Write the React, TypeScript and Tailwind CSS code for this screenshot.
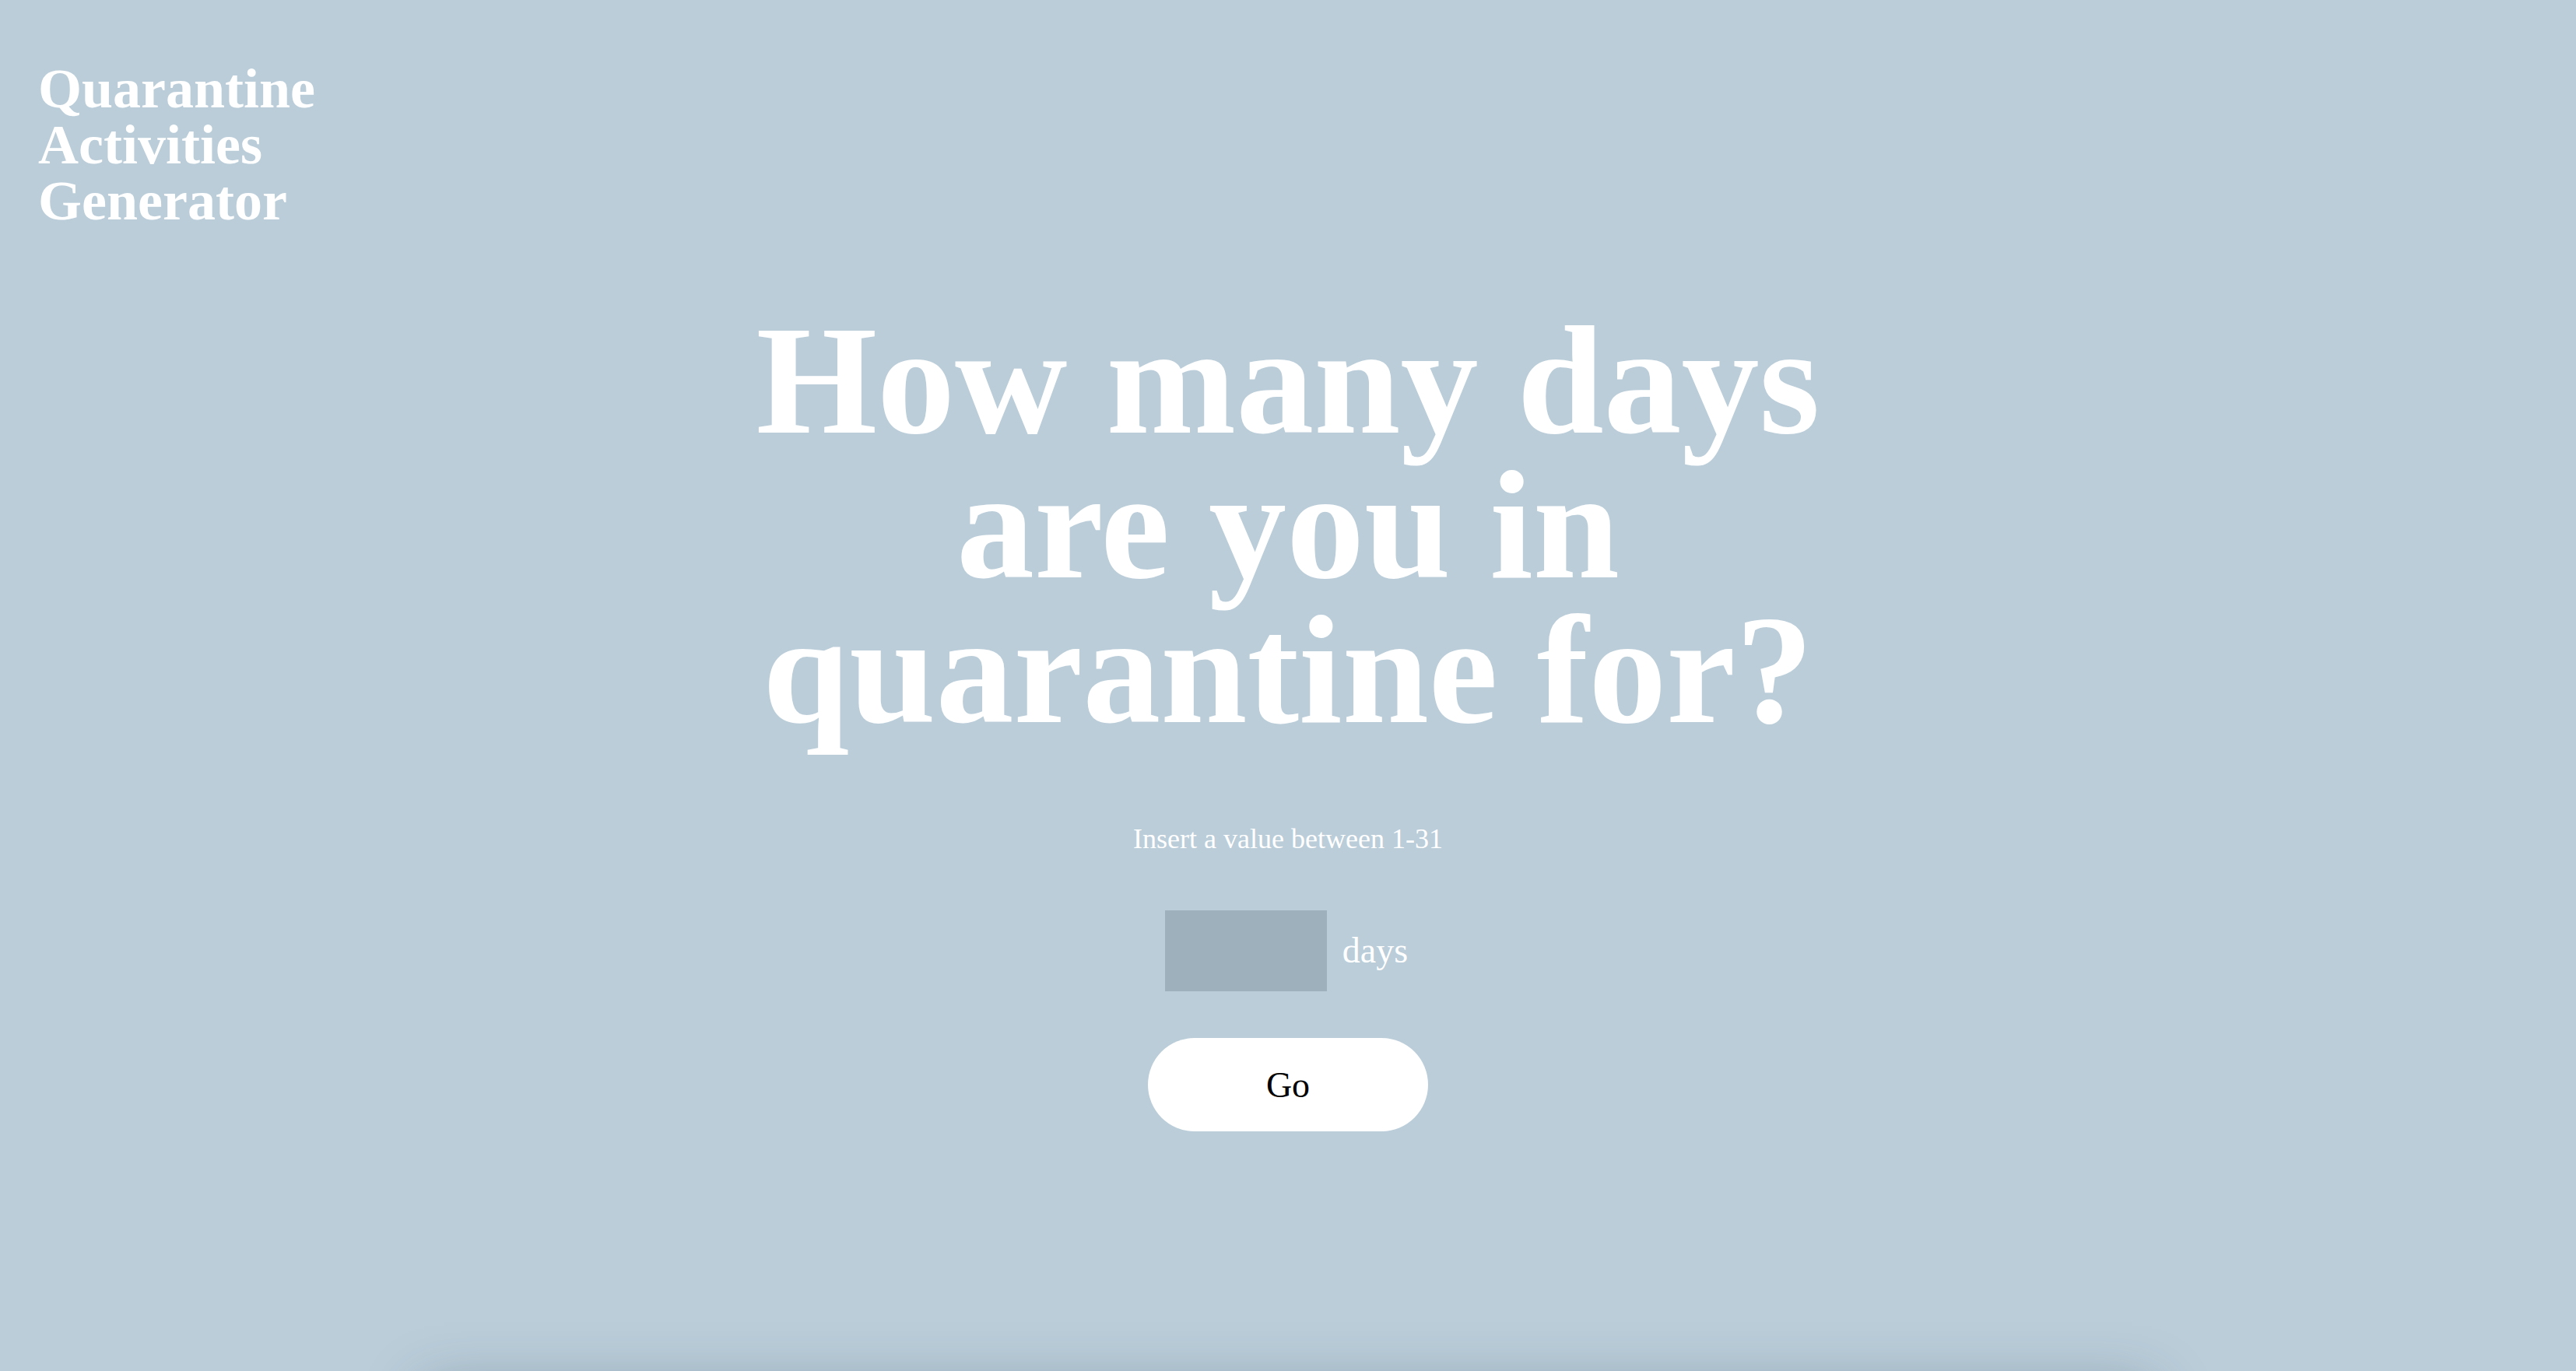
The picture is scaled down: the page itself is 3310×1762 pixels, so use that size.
export default function App() {
  return (
    <div
      className="h-screen overflow-hidden bg-[#bacdd9] text-white"
      style={{ fontFamily: '"Liberation Serif", "Times New Roman", serif' }}
    >
      {/* Logo */}
      <header className="pt-[78px] pl-[49px]">
        <h1 className="text-[72px] font-bold leading-[72px] w-[400px]">
          Quarantine Activities Generator
        </h1>
      </header>

      {/* Question */}
      <main className="flex flex-col items-center mt-[102px]">
        <h2 className="text-[200px] font-bold leading-[186px] text-center w-[1420px]">
          How many days are you in quarantine for?
        </h2>

        <p className="mt-[104px] text-[36px] leading-[40px]">Insert a value between 1-31</p>

        <div className="mt-[72px] flex items-center gap-[20px]">
          <input
            type="number"
            className="w-[208px] h-[104px] bg-[#9eb0bc] border-0 outline-none text-[46px] text-white text-center"
          />
          <span className="text-[46px] leading-[52px] pr-[4px]">days</span>
        </div>

        <button className="mt-[60px] w-[360px] h-[120px] rounded-full bg-white text-black text-[46px]">
          Go
        </button>
      </main>

      {/* Next section peeking below the fold */}
      <section className="mx-auto mt-[330px] w-[2220px] h-[400px] bg-[#bacdd9] shadow-[0_0_70px_rgba(40,60,80,0.35)]" />
    </div>
  );
}
